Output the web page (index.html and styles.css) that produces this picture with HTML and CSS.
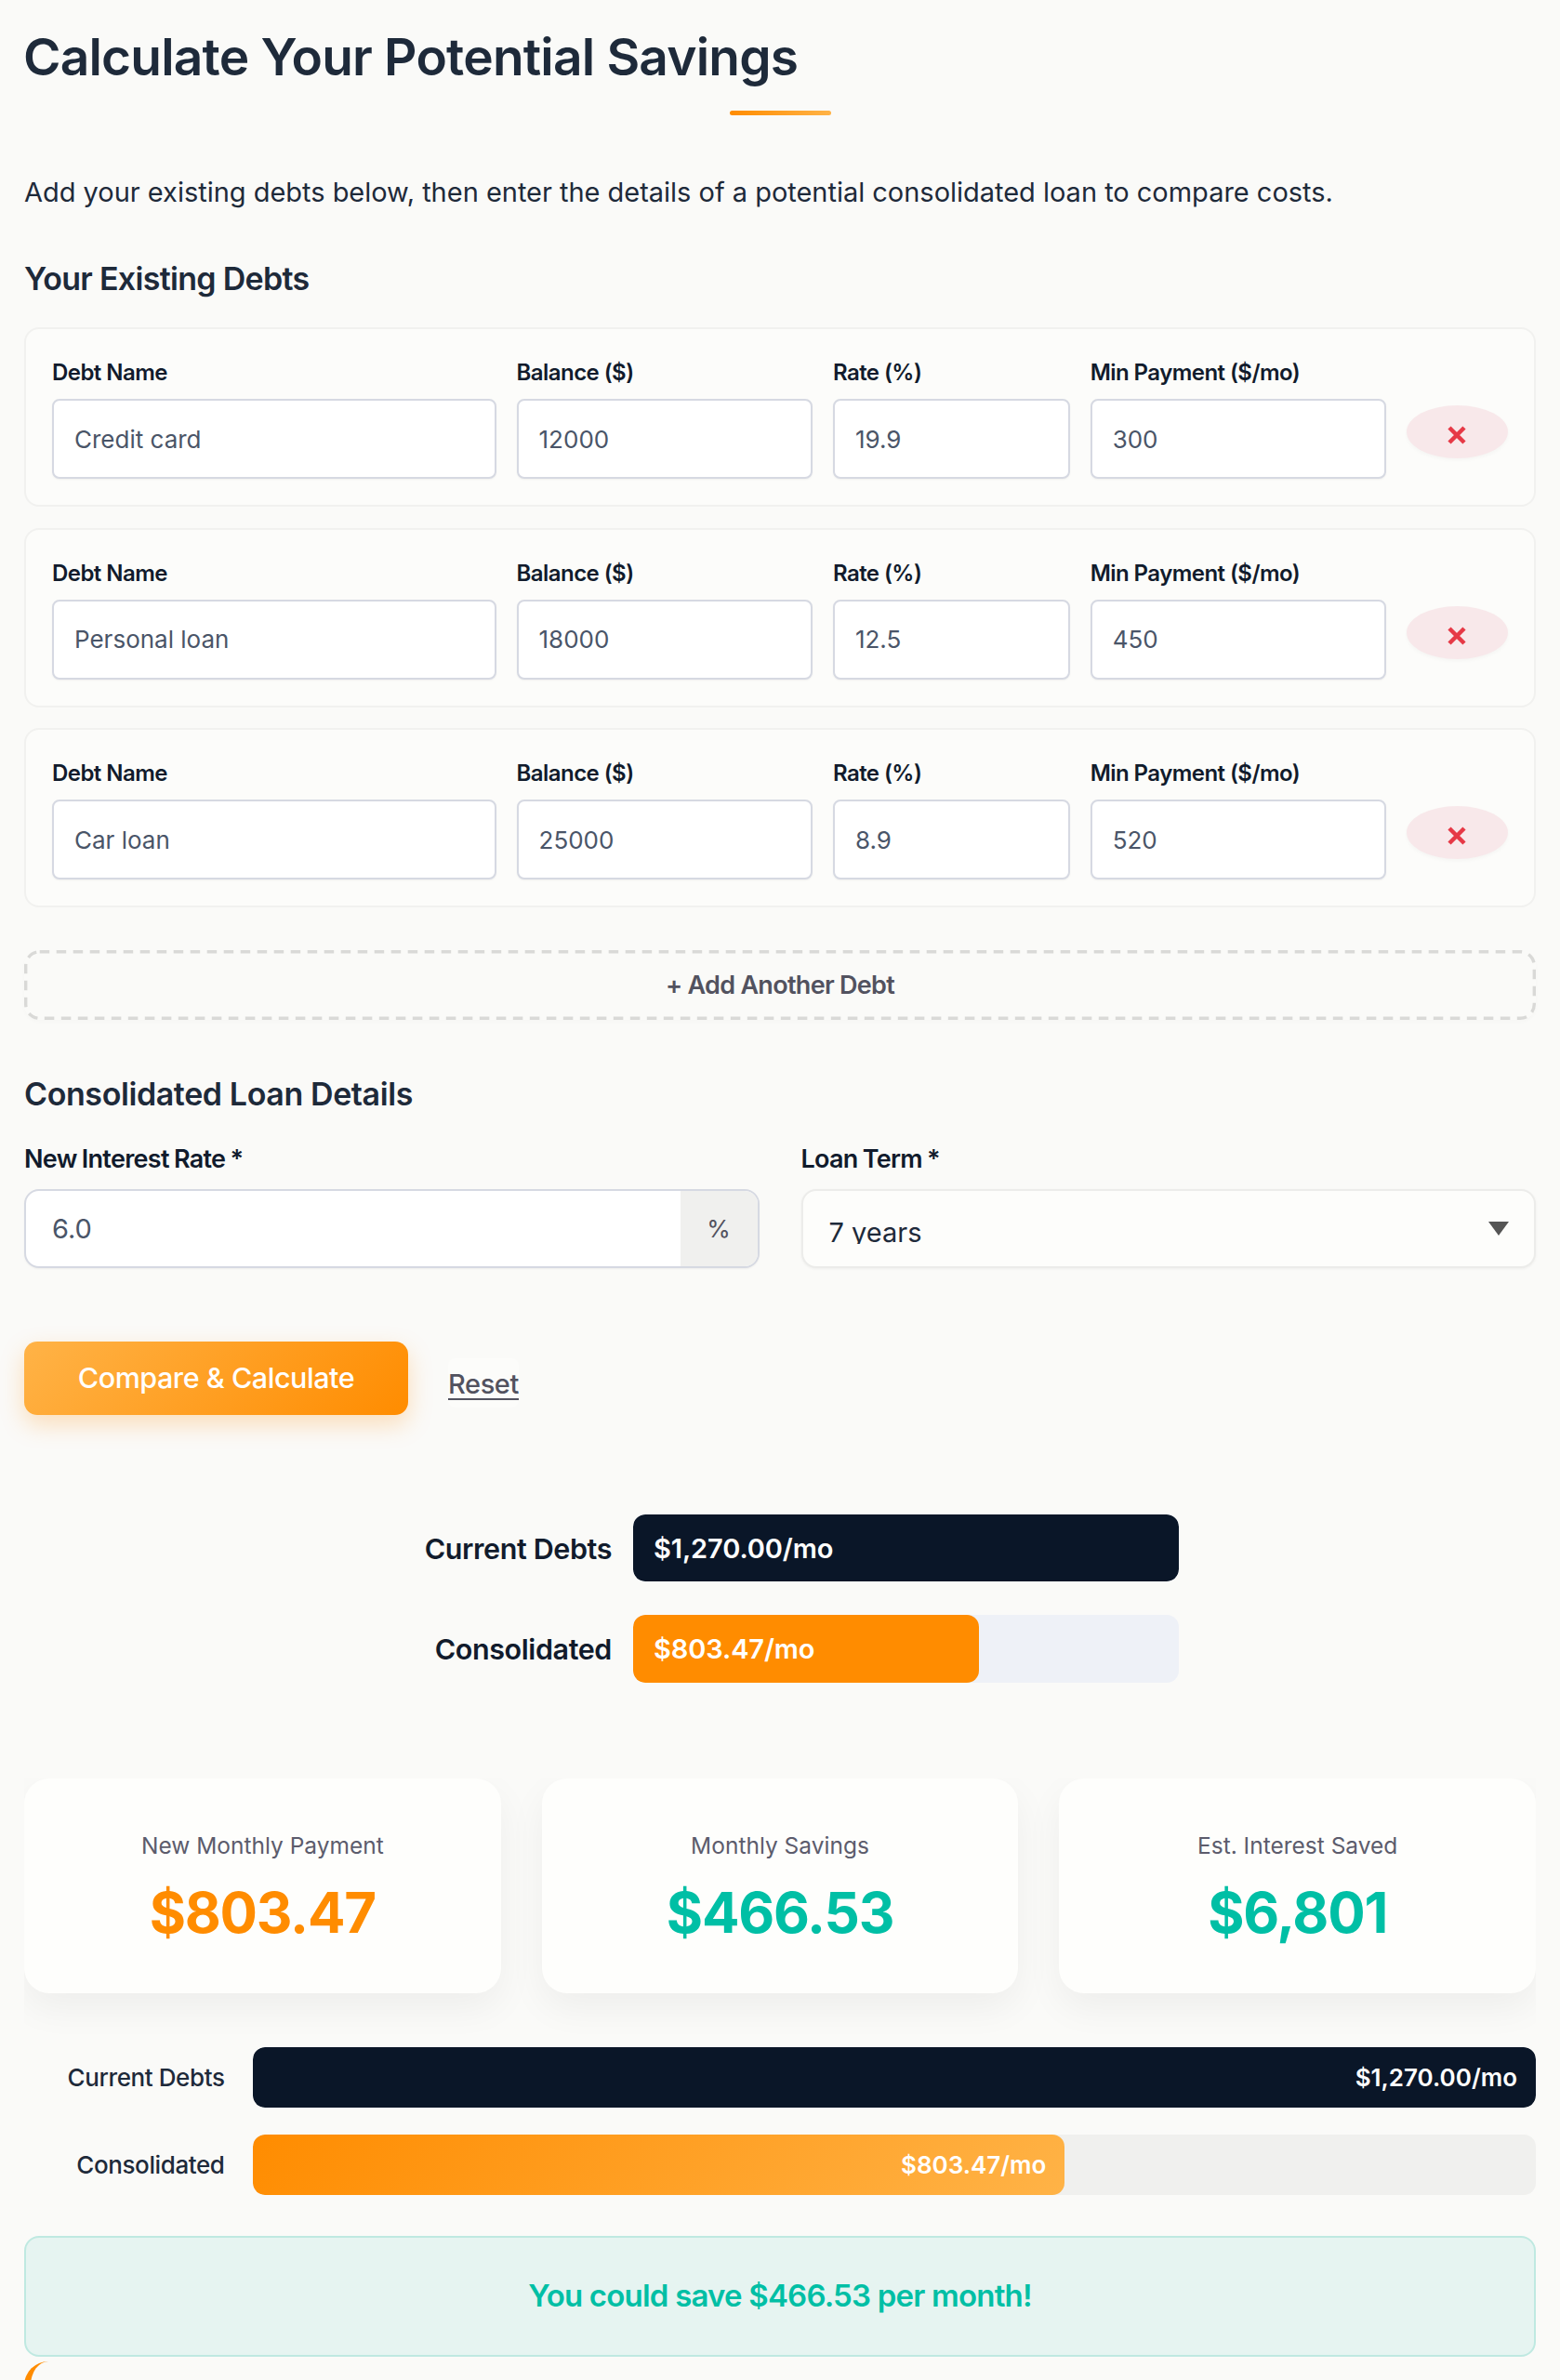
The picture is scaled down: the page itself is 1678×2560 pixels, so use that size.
FILE: index.html
```html
<!DOCTYPE html>
<html lang="en">
<head>
<meta charset="utf-8">
<title>Calculate Your Potential Savings</title>
<link rel="stylesheet" href="styles.css">
</head>
<body>
<main class="page">
  <h1 class="title">Calculate Your Potential Savings</h1>
  <div class="title-rule"></div>
  <p class="intro">Add your existing debts below, then enter the details of a potential consolidated loan to compare costs.</p>

  <h2 class="section-title first">Your Existing Debts</h2>
  <div class="debts">
    <div class="debt">
      <label class="field"><span class="field-label">Debt Name</span><input class="input" value="Credit card"></label>
      <label class="field"><span class="field-label">Balance ($)</span><input class="input" value="12000"></label>
      <label class="field"><span class="field-label">Rate (%)</span><input class="input" value="19.9"></label>
      <label class="field"><span class="field-label">Min Payment ($/mo)</span><input class="input" value="300"></label>
      <button class="remove" aria-label="Remove"><svg class="remove-icon" viewBox="0 0 18 18"><path d="M3 3 15 15M15 3 3 15"/></svg></button>
    </div>
    <div class="debt">
      <label class="field"><span class="field-label">Debt Name</span><input class="input" value="Personal loan"></label>
      <label class="field"><span class="field-label">Balance ($)</span><input class="input" value="18000"></label>
      <label class="field"><span class="field-label">Rate (%)</span><input class="input" value="12.5"></label>
      <label class="field"><span class="field-label">Min Payment ($/mo)</span><input class="input" value="450"></label>
      <button class="remove" aria-label="Remove"><svg class="remove-icon" viewBox="0 0 18 18"><path d="M3 3 15 15M15 3 3 15"/></svg></button>
    </div>
    <div class="debt">
      <label class="field"><span class="field-label">Debt Name</span><input class="input" value="Car loan"></label>
      <label class="field"><span class="field-label">Balance ($)</span><input class="input" value="25000"></label>
      <label class="field"><span class="field-label">Rate (%)</span><input class="input" value="8.9"></label>
      <label class="field"><span class="field-label">Min Payment ($/mo)</span><input class="input" value="520"></label>
      <button class="remove" aria-label="Remove"><svg class="remove-icon" viewBox="0 0 18 18"><path d="M3 3 15 15M15 3 3 15"/></svg></button>
    </div>
  </div>
  <button class="add-debt">
    <svg class="add-outline" viewBox="0 0 1626 75" aria-hidden="true"><rect x="1.7" y="1.7" width="1622.6" height="71.6" rx="15"/></svg>
    + Add Another Debt
  </button>

  <h2 class="section-title second">Consolidated Loan Details</h2>
  <div class="loan-row">
    <div class="loan-field">
      <label class="loan-label">New Interest Rate *</label>
      <div class="input-group">
        <input class="group-input" value="6.0">
        <span class="addon">%</span>
      </div>
    </div>
    <div class="loan-field">
      <label class="loan-label">Loan Term *</label>
      <div class="select-wrap">
        <select class="select"><option>7 years</option></select>
        <svg class="select-arrow" viewBox="0 0 22 15"><path d="M0 0H22L11 15Z"/></svg>
      </div>
    </div>
  </div>

  <div class="actions">
    <button class="primary">Compare &amp; Calculate</button>
    <a class="reset"><span class="reset-text">Reset</span></a>
  </div>

  <div class="mini-chart">
    <span class="mini-label">Current Debts</span>
    <div class="mini-track"><div class="mini-fill navy full">$1,270.00/mo</div></div>
    <span class="mini-label">Consolidated</span>
    <div class="mini-track tall"><div class="mini-fill orange" style="width:63.3%">$803.47/mo</div></div>
  </div>

  <div class="stats-clip">
    <div class="stats">
      <div class="stat"><div class="stat-label">New Monthly Payment</div><div class="stat-value accent">$803.47</div></div>
      <div class="stat"><div class="stat-label">Monthly Savings</div><div class="stat-value good">$466.53</div></div>
      <div class="stat"><div class="stat-label">Est. Interest Saved</div><div class="stat-value good">$6,801</div></div>
    </div>
  </div>

  <div class="bars">
    <span class="bar-label">Current Debts</span>
    <div class="bar-track"><div class="bar-fill navy" style="width:100%">$1,270.00/mo</div></div>
    <span class="bar-label">Consolidated</span>
    <div class="bar-track"><div class="bar-fill gradient" style="width:63.3%">$803.47/mo</div></div>
  </div>

  <div class="banner">You could save $466.53 per month!</div>
  <div class="next-panel"></div>
</main>
</body>
</html>
```

FILE: styles.css
```css
* { box-sizing: border-box; }
html, body { margin: 0; height: 2560px; overflow: hidden; }
body { background: #fafaf8; font-family: Inter, "Liberation Sans", sans-serif; color: #1e2a3a; }
.page { padding: 26px 26px 0 26px; }

.title { margin: 0 0 0 -1px; font-size: 55px; line-height: 70px; font-weight: 600; letter-spacing: -0.8px; color: #1e2a3a; }
.title-rule { width: 109px; height: 5px; margin: 23px auto 0; border-radius: 3px; background: linear-gradient(90deg, #ff8c00, #ffb347); }
.intro { margin: 63px 0 0; font-size: 29px; line-height: 40px; letter-spacing: -0.02px; color: #1e2a3a; }

.section-title { margin: 0; font-size: 34px; line-height: 44px; font-weight: 600; color: #1e2a3a; }
.section-title.first { margin-top: 51px; letter-spacing: -0.7px; }
.section-title.second { margin-top: 58px; letter-spacing: -0.4px; }

.debts { display: flex; flex-direction: column; gap: 22.5px; margin-top: 30px; }
.debt {
  display: grid; grid-template-columns: 3fr 2fr 1.6fr 2fr 109px; column-gap: 22px;
  height: 193px; padding: 31px 28px 28px 28px;
  background: #fcfcfa; border: 2px solid #f1f1ef; border-radius: 16px;
}
.field { display: flex; flex-direction: column; gap: 14px; min-width: 0; }
.field-label { padding-top: 1px; height: 30px; font-size: 24px; line-height: 30px; font-weight: 600; letter-spacing: -0.55px; color: #111b2c; }
.input {
  width: 100%; height: 86px; padding: 0 22px; font: 400 26px Inter, sans-serif; color: #4a5568;
  background: #fff; border: 2px solid #d6d9e2; border-radius: 8px; box-shadow: 0 1px 2px rgba(0,0,0,.05); outline: 0;
}
.remove {
  align-self: end; height: 57px; margin-bottom: 22px; padding: 7px 0 0; display: flex; align-items: center; justify-content: center;
  border: 0; border-radius: 50%; background: #f8e8ea; box-shadow: 0 2px 4px rgba(0,0,0,.03);
}
.remove-icon { width: 24px; height: 24px; fill: none; stroke: #e63946; stroke-width: 3.4; }

.add-debt {
  position: relative; display: block; width: 100%; height: 75px; margin-top: 46px; font: 600 27px Inter, sans-serif; letter-spacing: -0.7px; color: #52525f;
  background: transparent; border: 0; border-radius: 16px; box-shadow: 0 2px 4px rgba(0,0,0,.02);
}
.add-outline { position: absolute; inset: 0; width: 100%; height: 100%; fill: none; stroke: #d9d9d7; stroke-width: 3.4; stroke-dasharray: 10.5 7.5; }

.loan-row { display: grid; grid-template-columns: 1fr 1fr; column-gap: 45px; margin-top: 33px; }
.loan-field { display: flex; flex-direction: column; gap: 17px; min-width: 0; }
.loan-label { font-size: 27px; line-height: 30px; font-weight: 600; letter-spacing: -0.7px; word-spacing: -1px; color: #111b2c; }
.input-group { display: flex; height: 85px; overflow: hidden; background: #fff; border: 2px solid #d6d9e2; border-radius: 16px; box-shadow: 0 1px 2px rgba(0,0,0,.05); }
.group-input { flex: 1; min-width: 0; padding: 0 28px; font: 400 29px Inter, sans-serif; color: #4a5568; border: 0; outline: 0; background: transparent; }
.addon { display: flex; align-items: center; justify-content: center; width: 83px; font-size: 26px; color: #52525f; background: #f0f0ee; }
.select-wrap { position: relative; height: 85px; }
.select {
  display: block; width: 100%; height: 85px; padding: 27px 60px 24px 28px; font: 400 29px Inter, sans-serif; color: #1e2a3a;
  appearance: none; background: #fdfdfb; border: 2px solid #ececea; border-radius: 16px; box-shadow: 0 1px 3px rgba(0,0,0,.05); outline: 0;
}
.select-arrow { position: absolute; top: 35px; right: 29px; width: 22px; height: 15px; fill: #555; }

.actions { display: flex; align-items: flex-start; gap: 43px; margin-top: 79px; }
.primary {
  width: 413px; height: 79px; padding: 0 0 2px; font: 500 30.5px Inter, sans-serif; letter-spacing: -0.45px; color: #fff;
  border: 0; border-radius: 14px; background: linear-gradient(135deg, #ffb347, #ff8c00); box-shadow: 0 10px 26px rgba(255,140,0,.25);
}
.reset { display: block; height: 53px; margin-top: 18px; padding: 14px 0 0; border-radius: 8px; background: #fcfcfa; }
.reset-text { display: block; font-size: 29px; line-height: 28px; padding-bottom: 1px; font-weight: 500; letter-spacing: -0.4px; color: #52525f; border-bottom: 2px solid #52525f; }

.navy { background: #0a1628; }
.mini-chart { display: grid; grid-template-columns: 248px 587px; column-gap: 23px; row-gap: 36px; justify-content: center; align-items: center; margin-top: 107px; }
.mini-label { text-align: right; font-size: 30.5px; font-weight: 600; letter-spacing: -0.4px; color: #111b2c; }
.mini-track { height: 72px; border-radius: 13px; overflow: hidden; background: #eef1f7; }
.mini-track.tall { height: 73px; }
.mini-fill { display: flex; align-items: center; height: 100%; padding: 0 0 0 22px; font-size: 29px; font-weight: 600; letter-spacing: -0.1px; color: #fff; border-radius: 13px; }
.mini-fill.orange { background: #ff8c00; }

.stats-clip { margin-top: 103px; padding-bottom: 51px; overflow: hidden; }
.stats { display: grid; grid-template-columns: repeat(3, 1fr); column-gap: 44px; }
.stat { height: 231px; padding-top: 55px; text-align: center; background: #fefefc; border-radius: 27px; box-shadow: 0 16px 40px rgba(0,0,0,.05); }
.stat-label { font-size: 24.5px; line-height: 34px; color: #5c5c6c; }
.stat-value { margin-top: 16px; font-size: 60px; line-height: 78px; font-weight: 700; letter-spacing: -1.2px; }
.accent { color: #ff8c00; }
.good { color: #00bfa5; }

.bars { display: grid; grid-template-columns: 215.5px 1fr; column-gap: 30px; row-gap: 29px; align-items: center; margin-top: 7px; }
.bar-label { text-align: right; font-size: 26px; font-weight: 500; letter-spacing: -0.4px; color: #1e2a3a; }
.bar-track { height: 65px; border-radius: 13px; overflow: hidden; background: #f0f0ee; }
.bar-fill { display: flex; align-items: center; justify-content: flex-end; height: 100%; padding-right: 20px; font-size: 26px; font-weight: 600; color: #fff; border-radius: 13px; }
.gradient { background: linear-gradient(135deg, #ff8c00, #ffb347); }

.banner { display: flex; align-items: center; justify-content: center; height: 129.5px; margin-top: 44px; padding-bottom: 2px; font-size: 33px; font-weight: 600; letter-spacing: -0.8px; color: #00bfa5; background: #e6f4f1; border: 2px solid #bfe9e1; border-radius: 16px; }
.next-panel { height: 120px; margin-top: 5px; border-left: 7px solid #ff8c00; border-radius: 26px; }
```
